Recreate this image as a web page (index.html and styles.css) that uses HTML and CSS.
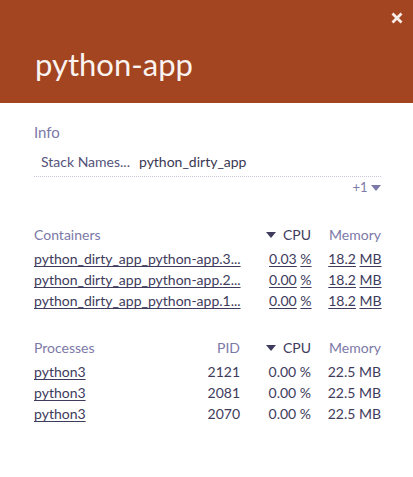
FILE: index.html
```html
<!DOCTYPE html>
<html>
<head>
<meta charset="utf-8">
<link rel="stylesheet" href="styles.css">
</head>
<body>
<div class="panel">
  <header class="head">
    <h1 class="title">python-app</h1>
    <button class="close" aria-label="Close">
      <svg width="12" height="12" viewBox="0 0 12 12"><path d="M1.5 1.5 L10.5 10.5 M10.5 1.5 L1.5 10.5" stroke="#f7ece8" stroke-width="2.8" stroke-linecap="butt"/></svg>
    </button>
  </header>
  <section class="info">
    <div class="sec-label">Info</div>
    <div class="kv">
      <span class="k">Stack Names...</span>
      <span class="v">python_dirty_app</span>
    </div>
    <div class="more">+1 <span class="caret"></span></div>
  </section>
  <section class="tbl containers">
    <div class="row hdr">
      <span class="sec-label">Containers</span>
      <span class="num sorted"><span class="caret dark"></span> CPU</span>
      <span class="num sec-label">Memory</span>
    </div>
    <div class="row">
      <a class="name">python_dirty_app_python-app.3...</a>
      <span class="num"><a>0.03</a> <a>%</a></span>
      <span class="num"><a>18.2</a> <a>MB</a></span>
    </div>
    <div class="row">
      <a class="name">python_dirty_app_python-app.2...</a>
      <span class="num"><a>0.00</a> <a>%</a></span>
      <span class="num"><a>18.2</a> <a>MB</a></span>
    </div>
    <div class="row">
      <a class="name">python_dirty_app_python-app.1...</a>
      <span class="num"><a>0.00</a> <a>%</a></span>
      <span class="num"><a>18.2</a> <a>MB</a></span>
    </div>
  </section>
  <section class="tbl processes">
    <div class="row hdr">
      <span class="sec-label">Processes</span>
      <span class="num sec-label">PID</span>
      <span class="num sorted"><span class="caret dark"></span> CPU</span>
      <span class="num sec-label">Memory</span>
    </div>
    <div class="row">
      <a class="name">python3</a>
      <span class="num">2121</span>
      <span class="num">0.00 %</span>
      <span class="num">22.5 MB</span>
    </div>
    <div class="row">
      <a class="name">python3</a>
      <span class="num">2081</span>
      <span class="num">0.00 %</span>
      <span class="num">22.5 MB</span>
    </div>
    <div class="row">
      <a class="name">python3</a>
      <span class="num">2070</span>
      <span class="num">0.00 %</span>
      <span class="num">22.5 MB</span>
    </div>
  </section>
</div>
</body>
</html>
```
FILE: styles.css
```css
* { box-sizing: border-box; }
html, body { margin: 0; padding: 0; background: #fff; }
body { font-family: "Lato", "Open Sans", sans-serif; color: #3e3b5c; }
.panel { width: 413px; height: 477px; background: #fff; }
.head {
  position: relative;
  height: 103px;
  background: #a24520;
  padding: 46px 0 0 35px;
}
.title {
  margin: 0;
  font-weight: 400;
  font-size: 31px;
  line-height: 36px;
  color: #fbf3ef;
}
.close {
  position: absolute;
  top: 12px;
  right: 10px;
  width: 12px;
  height: 12px;
  padding: 0;
  border: 0;
  background: none;
  display: flex;
}
.info { padding: 19px 32px 0 34px; }
.sec-label { color: #7c79a8; font-size: 14px; }
.info > .sec-label { font-size: 15px; line-height: 20px; }
.kv {
  display: flex;
  gap: 9px;
  padding: 10px 0 4px 7px;
  font-size: 14px;
  line-height: 20px;
  border-bottom: 1px dotted #c9c7dc;
}
.k { color: #55527a; }
.v { color: #3a3852; }
.more {
  text-align: right;
  font-size: 13px;
  line-height: 18px;
  padding-top: 1px;
  color: #7c79a8;
}
.caret {
  display: inline-block;
  width: 0; height: 0;
  border-left: 5px solid transparent;
  border-right: 5px solid transparent;
  border-top: 6px solid #7c79a8;
  vertical-align: middle;
  margin-bottom: 2px;
}
.caret.dark { border-top-color: #3e3b5c; margin-right: 3px; }
.tbl { padding: 0 32px 0 34px; }
.containers { margin-top: 30px; }
.processes { margin-top: 28px; }
.row {
  display: grid;
  grid-template-columns: 1fr 71px 70px;
  height: 21px;
  line-height: 21px;
  font-size: 14px;
  white-space: nowrap;
}
.processes .row { grid-template-columns: 1fr 60px 71px 70px; }
.row.hdr { height: 22px; line-height: 18px; }
.num { text-align: right; }
.sorted { color: #3e3b5c; }
a { color: #3e3b5c; text-decoration: underline; text-underline-offset: 2px; }
```
